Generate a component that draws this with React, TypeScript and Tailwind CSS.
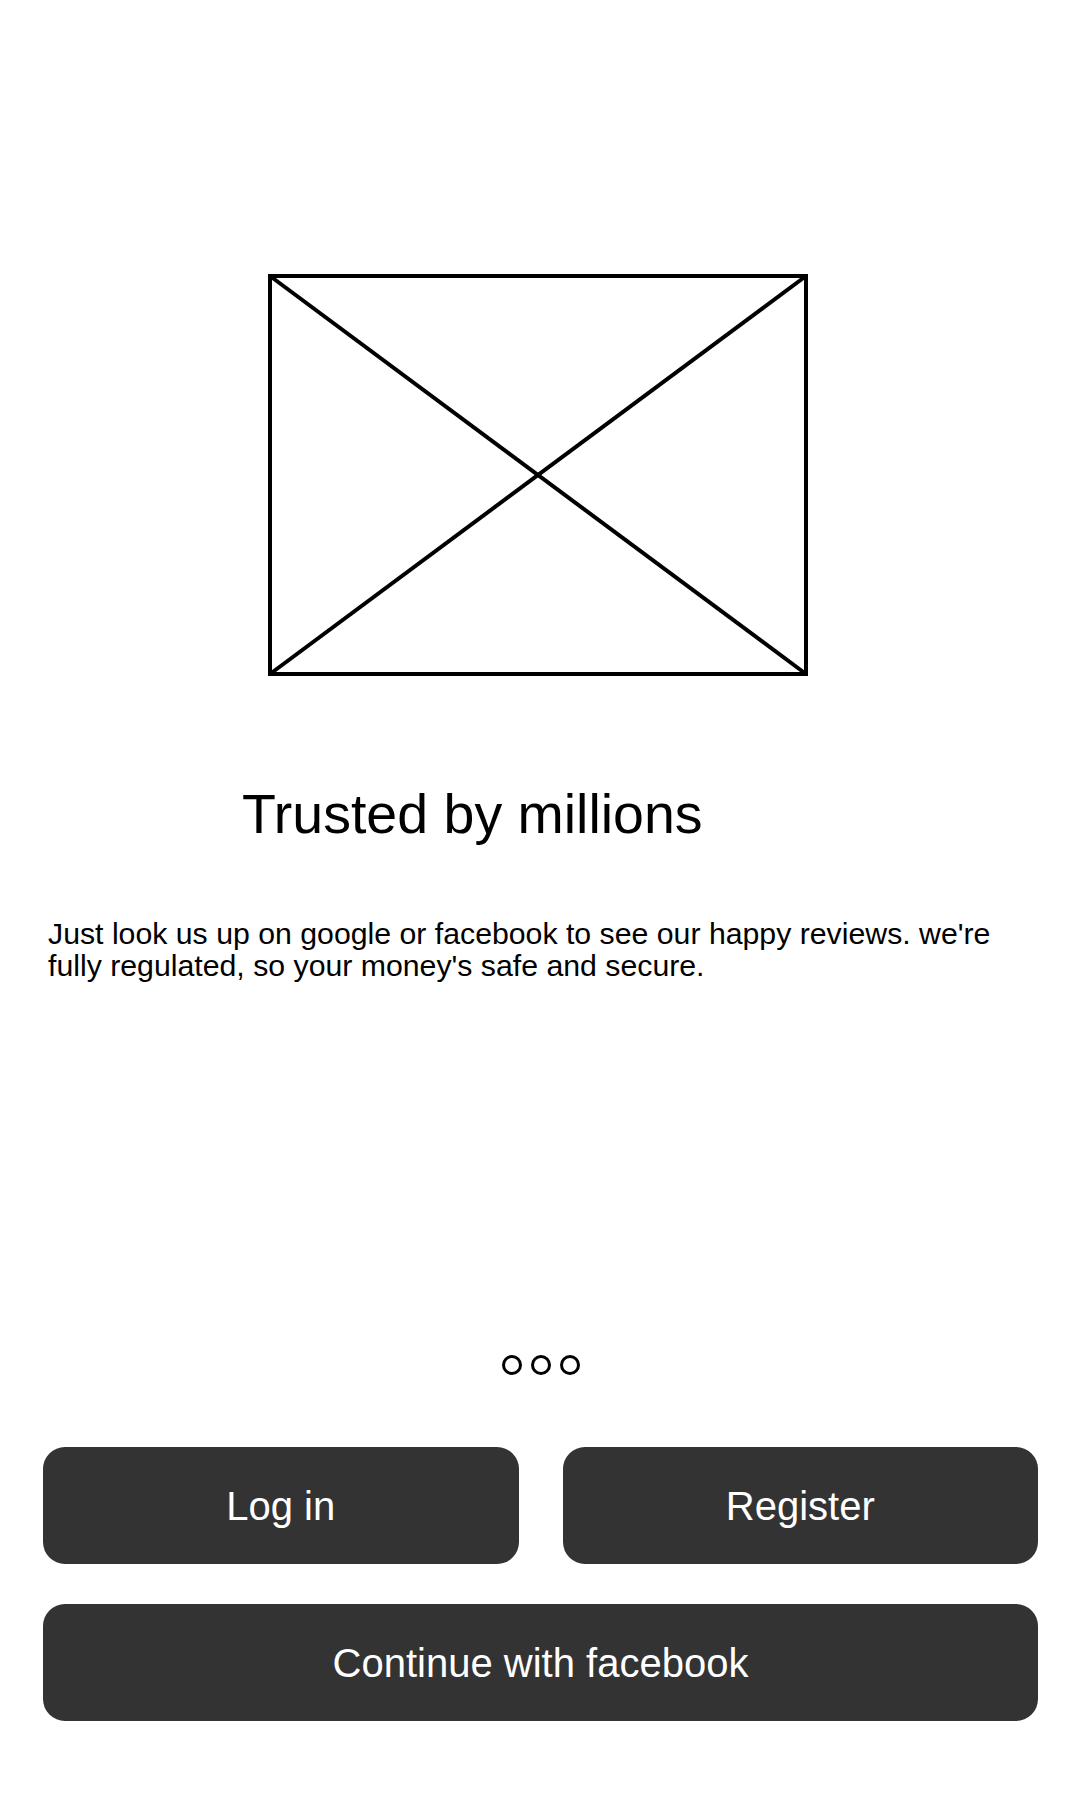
import React from "react";

function Placeholder() {
  return (
    <svg width="540" height="402" viewBox="0 0 540 402" className="block">
      <rect x="2" y="2" width="536" height="398" fill="none" stroke="#000" strokeWidth="4" />
      <line x1="2" y1="2" x2="538" y2="400" stroke="#000" strokeWidth="4" />
      <line x1="538" y1="2" x2="2" y2="400" stroke="#000" strokeWidth="4" />
    </svg>
  );
}

function Dot() {
  return <div className="w-5 h-5 rounded-full border-[3px] border-black" />;
}

export default function App() {
  return (
    <div
      className="w-[1080px] h-[1800px] bg-white text-black flex flex-col"
      style={{ fontFamily: '"Liberation Sans", Arial, sans-serif' }}
    >
      <div className="pt-[274px] pl-[268px]">
        <Placeholder />
      </div>

      <h1 className="mt-[107px] pl-[242px] text-[55.5px] leading-[62px] font-normal">
        Trusted by millions
      </h1>

      <p className="mt-[73px] pl-[48px] pr-[36px] text-[30.25px] leading-[32px]">
        Just look us up on google or facebook to see our happy reviews. we're fully regulated, so your money's safe and secure.
      </p>

      <div className="mt-[373px] flex justify-center gap-[9px] pl-[2px]">
        <Dot />
        <Dot />
        <Dot />
      </div>

      <div className="mt-[72px] pl-[43px] pr-[42px] flex flex-col gap-[40px]">
        <div className="flex gap-[44px]">
          <button className="flex-1 h-[117px] rounded-[22px] bg-[#333333] text-white text-[40px]">
            Log in
          </button>
          <button className="flex-1 h-[117px] rounded-[22px] bg-[#333333] text-white text-[40px]">
            Register
          </button>
        </div>
        <button className="w-full h-[117px] rounded-[22px] bg-[#333333] text-white text-[40px]">
          Continue with facebook
        </button>
      </div>
    </div>
  );
}
